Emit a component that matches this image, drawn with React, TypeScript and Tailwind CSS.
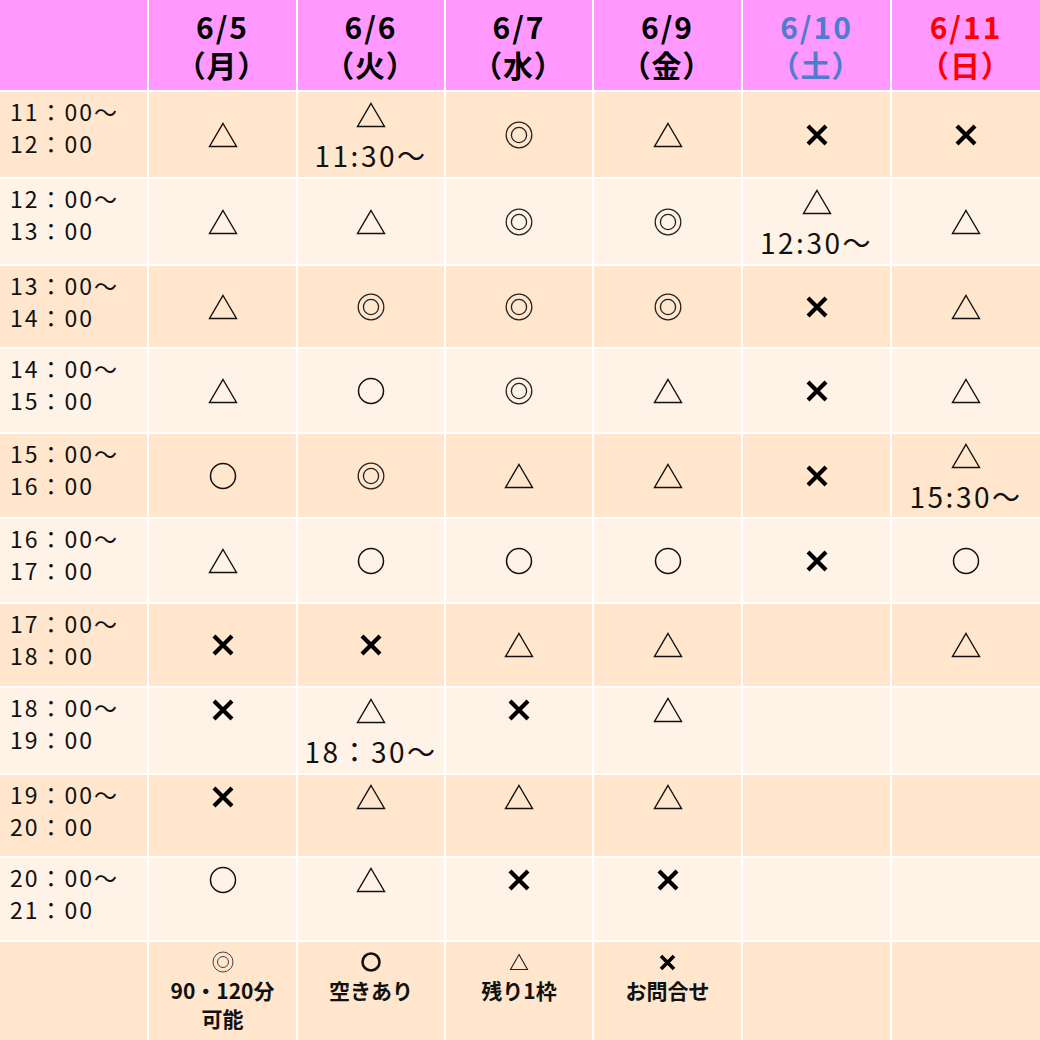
import React from 'react';

type Mark = 'tri' | 'circle' | 'double' | 'cross' | '';

interface Slot {
  mark: Mark;
  note?: string;
}

const font = "font-['Noto_Sans_CJK_JP','Noto_Sans',sans-serif]";

const days = [
  { date: '6/5', wd: '（月）', color: 'text-black' },
  { date: '6/6', wd: '（火）', color: 'text-black' },
  { date: '6/7', wd: '（水）', color: 'text-black' },
  { date: '6/9', wd: '（金）', color: 'text-black' },
  { date: '6/10', wd: '（土）', color: 'text-[#4f7bd0]' },
  { date: '6/11', wd: '（日）', color: 'text-[#ff0000]' },
];

const s = (mark: Mark, note?: string): Slot => ({ mark, note });

const rows: { from: string; to: string; top?: boolean; slots: Slot[] }[] = [
  { from: '11：00～', to: '12：00', slots: [s('tri'), s('tri', '11:30～'), s('double'), s('tri'), s('cross'), s('cross')] },
  { from: '12：00～', to: '13：00', slots: [s('tri'), s('tri'), s('double'), s('double'), s('tri', '12:30～'), s('tri')] },
  { from: '13：00～', to: '14：00', slots: [s('tri'), s('double'), s('double'), s('double'), s('cross'), s('tri')] },
  { from: '14：00～', to: '15：00', slots: [s('tri'), s('circle'), s('double'), s('tri'), s('cross'), s('tri')] },
  { from: '15：00～', to: '16：00', slots: [s('circle'), s('double'), s('tri'), s('tri'), s('cross'), s('tri', '15:30～')] },
  { from: '16：00～', to: '17：00', slots: [s('tri'), s('circle'), s('circle'), s('circle'), s('cross'), s('circle')] },
  { from: '17：00～', to: '18：00', slots: [s('cross'), s('cross'), s('tri'), s('tri'), s(''), s('tri')] },
  { from: '18：00～', to: '19：00', top: true, slots: [s('cross'), s('tri', '18：30～'), s('cross'), s('tri'), s(''), s('')] },
  { from: '19：00～', to: '20：00', top: true, slots: [s('cross'), s('tri'), s('tri'), s('tri'), s(''), s('')] },
  { from: '20：00～', to: '21：00', top: true, slots: [s('circle'), s('tri'), s('cross'), s('cross'), s(''), s('')] },
];

function Symbol({ mark, small }: { mark: Mark; small?: boolean }) {
  if (mark === 'tri') {
    return small ? (
      <svg width="20" height="18" viewBox="0 0 20 18">
        <path d="M10 1.5 L18.5 16.5 L1.5 16.5 Z" fill="none" stroke="#222" strokeWidth="1.1" />
      </svg>
    ) : (
      <svg width="30" height="26" viewBox="0 0 30 26">
        <path d="M15 1.5 L28.5 24.5 L1.5 24.5 Z" fill="none" stroke="#111" strokeWidth="1.4" />
      </svg>
    );
  }
  if (mark === 'circle') {
    return small ? (
      <svg width="22" height="22" viewBox="0 0 22 22">
        <circle cx="11" cy="11" r="8.5" fill="none" stroke="#111" strokeWidth="2.6" />
      </svg>
    ) : (
      <svg width="28" height="28" viewBox="0 0 28 28">
        <circle cx="14" cy="14" r="12.5" fill="none" stroke="#111" strokeWidth="1.5" />
      </svg>
    );
  }
  if (mark === 'double') {
    return small ? (
      <svg width="22" height="22" viewBox="0 0 22 22">
        <circle cx="11" cy="11" r="10" fill="none" stroke="#444" strokeWidth="1" />
        <circle cx="11" cy="11" r="5.5" fill="none" stroke="#444" strokeWidth="1" />
      </svg>
    ) : (
      <svg width="28" height="28" viewBox="0 0 28 28">
        <circle cx="14" cy="14" r="12.8" fill="none" stroke="#222" strokeWidth="1.3" />
        <circle cx="14" cy="14" r="7.6" fill="none" stroke="#222" strokeWidth="1.3" />
      </svg>
    );
  }
  if (mark === 'cross') {
    return small ? (
      <svg width="17" height="17" viewBox="0 0 17 17">
        <path d="M2 2 L15 15 M15 2 L2 15" stroke="#000" strokeWidth="3.6" />
      </svg>
    ) : (
      <svg width="24" height="24" viewBox="0 0 24 24">
        <path d="M3 3 L21 21 M21 3 L3 21" stroke="#000" strokeWidth="4.2" />
      </svg>
    );
  }
  return null;
}

function SlotCell({ slot, top, bg }: { slot: Slot; top?: boolean; bg: string }) {
  return (
    <div className={`${bg} flex flex-col items-center ${top && !slot.note ? 'justify-start pt-[2px]' : 'justify-center'}`}>
      {slot.mark && (
        <div className="h-[40px] flex items-center justify-center">
          <Symbol mark={slot.mark} />
        </div>
      )}
      {slot.note && (
        <div className="h-[40px] flex items-center text-[28px] leading-[40px] tracking-[2.5px] text-[#111]">{slot.note}</div>
      )}
    </div>
  );
}

const legend = [
  { mark: 'double' as Mark, lines: ['90・120分', '可能'] },
  { mark: 'circle' as Mark, lines: ['空きあり'] },
  { mark: 'tri' as Mark, lines: ['残り1枠'] },
  { mark: 'cross' as Mark, lines: ['お問合せ'] },
];

export default function App() {
  return (
    <div
      className={`${font} w-[1040px] h-[1040px] bg-white grid gap-[2px] grid-cols-[147px_147px_146px_146px_147px_147px_148px] grid-rows-[90px_85px_85px_81px_83px_83px_83px_82px_85px_81px_82px_98px]`}
    >
      {/* header */}
      <div className="bg-[#ff99ff]" />
      {days.map((d) => (
        <div key={d.date} className="bg-[#ff99ff] flex items-center justify-center">
          <p
            className={`text-center font-bold text-[30px] leading-[38px] tracking-[2px] [font-feature-settings:'palt'] ${d.color}`}
          >
            {d.date}
            <br />
            {d.wd}
          </p>
        </div>
      ))}

      {/* time slots */}
      {rows.map((r, i) => {
        const bg = i % 2 === 0 ? 'bg-[#ffe6cc]' : 'bg-[#fff2e6]';
        return (
          <React.Fragment key={r.from}>
            <div className={`${bg} pl-[10px] pt-[3px] text-[23px] leading-[32px] tracking-[2px] text-[#111]`}>
              <div>{r.from}</div>
              <div>{r.to}</div>
            </div>
            {r.slots.map((slot, j) => (
              <SlotCell key={j} slot={slot} top={r.top} bg={bg} />
            ))}
          </React.Fragment>
        );
      })}

      {/* legend */}
      <div className="bg-[#ffe6cc]" />
      {legend.map((l) => (
        <div key={l.lines[0]} className="bg-[#ffe6cc] flex flex-col items-center pt-[6px]">
          <div className="h-[28px] flex items-center justify-center">
            <Symbol mark={l.mark} small />
          </div>
          {l.lines.map((t) => (
            <div key={t} className="font-bold text-[21px] leading-[28px] text-[#111]">
              {t}
            </div>
          ))}
        </div>
      ))}
      <div className="bg-[#ffe6cc]" />
      <div className="bg-[#ffe6cc]" />
    </div>
  );
}
